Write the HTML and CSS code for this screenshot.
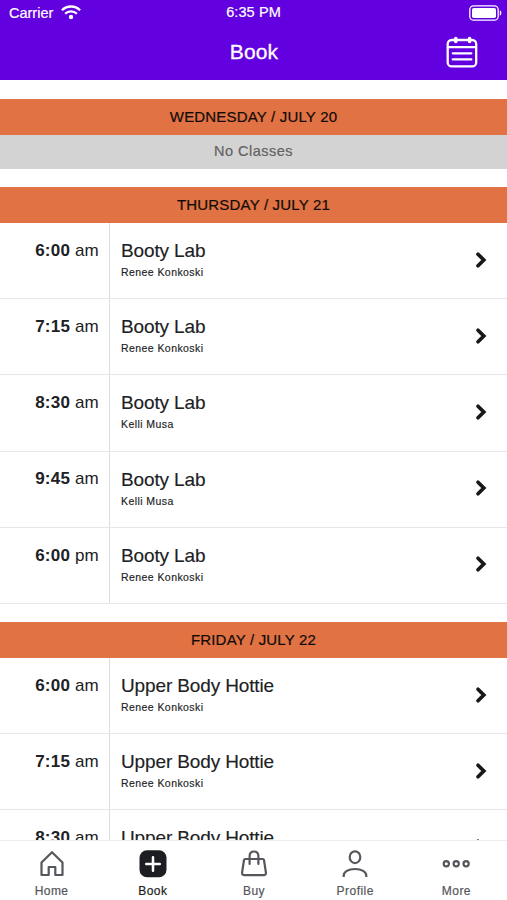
FILE: index.html
```html
<!DOCTYPE html>
<html lang="en">
<head>
<meta charset="utf-8">
<title>Book</title>
<link rel="stylesheet" href="styles.css">
</head>
<body>
<svg class="defs" width="0" height="0"><symbol id="chevron" viewBox="0 0 12 18"><path d="M3 3.200 8.800 9 3 14.800" fill="none" stroke="currentColor" stroke-width="3.700" stroke-linecap="round" stroke-linejoin="miter"/></symbol></svg>
<div class="app">
  <header class="top">
    <div class="status">
      <span class="carrier">Carrier
        <svg width="20" height="15" viewBox="0 0 20 15" fill="none" stroke="#fff" stroke-width="2.3"><path d="M.9 5.2a13 13 0 0 1 18.2 0M4.1 8.700a8.4 8.4 0 0 1 11.8 0"/><circle cx="10" cy="12" r="2.200" fill="#fff" stroke="none"/></svg>
      </span>
      <span class="clock">6:35 PM</span>
      <svg class="battery" width="33" height="16" viewBox="0 0 33 16"><rect x=".8" y=".8" width="28.4" height="14.4" rx="3.8" fill="none" stroke="#fff" stroke-width="1.3"/><rect x="3" y="3" width="24" height="10" rx="1.8" fill="#fff"/><path d="M30.8 5.2q1.6.8 1.6 2.8t-1.6 2.8z" fill="#fff"/></svg>
    </div>
    <div class="titlebar">
      <h1>Book</h1>
      <svg class="calendar" width="32" height="32" viewBox="0 0 32 32" fill="none" stroke="#fff" stroke-width="2.3" stroke-linecap="round"><rect x="1.7" y="4" width="28.5" height="26.4" rx="4"/><path d="M2 11.2h28M6.8 17.3h18.5M6.8 23.4h18.5"/><path d="M9.8 2.500v3M23.6 2.500v3" stroke-width="3.600"/></svg>
    </div>
  </header>
  <main class="schedule">
    <section class="day">
      <h2>WEDNESDAY / JULY 20</h2>
      <p class="empty">No Classes</p>
    </section>
    <section class="day">
      <h2>THURSDAY / JULY 21</h2>
      <div class="row"><div class="time"><b>6:00</b> am</div><div class="info"><div class="name">Booty Lab</div><div class="coach">Renee Konkoski</div></div><svg class="go"><use href="#chevron"/></svg></div>
      <div class="row"><div class="time"><b>7:15</b> am</div><div class="info"><div class="name">Booty Lab</div><div class="coach">Renee Konkoski</div></div><svg class="go"><use href="#chevron"/></svg></div>
      <div class="row"><div class="time"><b>8:30</b> am</div><div class="info"><div class="name">Booty Lab</div><div class="coach">Kelli Musa</div></div><svg class="go"><use href="#chevron"/></svg></div>
      <div class="row"><div class="time"><b>9:45</b> am</div><div class="info"><div class="name">Booty Lab</div><div class="coach">Kelli Musa</div></div><svg class="go"><use href="#chevron"/></svg></div>
      <div class="row"><div class="time"><b>6:00</b> pm</div><div class="info"><div class="name">Booty Lab</div><div class="coach">Renee Konkoski</div></div><svg class="go"><use href="#chevron"/></svg></div>
    </section>
    <section class="day">
      <h2>FRIDAY / JULY 22</h2>
      <div class="row"><div class="time"><b>6:00</b> am</div><div class="info"><div class="name">Upper Body Hottie</div><div class="coach">Renee Konkoski</div></div><svg class="go"><use href="#chevron"/></svg></div>
      <div class="row"><div class="time"><b>7:15</b> am</div><div class="info"><div class="name">Upper Body Hottie</div><div class="coach">Renee Konkoski</div></div><svg class="go"><use href="#chevron"/></svg></div>
      <div class="row"><div class="time"><b>8:30</b> am</div><div class="info"><div class="name">Upper Body Hottie</div></div><svg class="go"><use href="#chevron"/></svg></div>
    </section>
  </main>
  <nav class="tabs">
    <a class="tab"><svg width="28" height="28" viewBox="0 0 28 28"><path d="M3.5 25V12.500L14 2.200l10.5 10.3V25h-7.2v-8h-6.6v8z"/></svg>Home</a>
    <a class="tab active"><svg width="28" height="28" viewBox="0 0 28 28"><rect x=".5" y=".2" width="27" height="27" rx="7.5" fill="#1d1e21" stroke="none"/><path d="M14 7.2v13.6M7.2 14h13.6" stroke="#fff" stroke-width="2.5" stroke-linecap="round"/></svg>Book</a>
    <a class="tab"><svg width="28" height="28" viewBox="0 0 28 28"><path d="M5.2 9h17.6q1 0 1.200 1l1.900 12.500q.3 2.700-2.400 2.700h-19q-2.700 0-2.400-2.700L4 10q.2-1 1.200-1zM9.600 14V6.200q0-4.700 4.400-4.700t4.400 4.700V14" stroke-linecap="round"/></svg>Buy</a>
    <a class="tab"><svg width="28" height="28" viewBox="0 0 28 28"><ellipse cx="14" cy="7.200" rx="5.300" ry="5.900"/><path d="M2.700 27v-1.200c0-4 4.500-6.800 11.300-6.800s11.300 2.800 11.300 6.800V27"/></svg>Profile</a>
    <a class="tab"><svg width="28" height="28" viewBox="0 0 28 28"><circle cx="4.300" cy="13.800" r="2.600"/><circle cx="14.200" cy="13.800" r="2.600"/><circle cx="24.100" cy="13.800" r="2.600"/></svg>More</a>
  </nav>
</div>
</body>
</html>
```
FILE: styles.css
```css
* { box-sizing: border-box; }
body { margin: 0; font-family: "Liberation Sans", Arial, sans-serif; color: #202124; background: #fff; }
.defs { position: absolute; }
.app { height: 900px; display: flex; flex-direction: column; overflow: hidden; }
.top { flex: none; height: 80.4px; background: #6200e0; color: #fff; }
.status { height: 25px; padding: 0 5px 0 9px; display: grid; grid-template-columns: 1fr auto 1fr; align-items: center; font-size: 14.5px; -webkit-text-stroke: .2px; }
.carrier { display: flex; align-items: center; gap: 8px; }
.clock { margin: 0 4px; transform: translate(-2px, -1px); letter-spacing: .1px; }
.battery { justify-self: end; }
.titlebar { height: 54px; padding: 0 29.5px 0 62.5px; display: flex; align-items: center; }
h1 { flex: 1; margin: 0; text-align: center; font-size: 21px; font-weight: 400; letter-spacing: .1px; -webkit-text-stroke: .3px; }
.schedule { flex: 1; min-height: 0; overflow: hidden; }
.day { margin-top: 18.4px; }
h2 { margin: 0; height: 35.8px; line-height: 35px; text-align: center; font-size: 15px; font-weight: 400; letter-spacing: .18px; background: #e07243; color: #110b08; -webkit-text-stroke: .2px; }
.empty { margin: 0; height: 34.2px; line-height: 33px; text-align: center; font-size: 14.5px; letter-spacing: .5px; background: #d3d3d3; color: #626262; -webkit-text-stroke: .2px; }
.row { height: 76.2px; display: flex; border-bottom: 1px solid #e5e8ea; }
.time { width: 110px; padding: 17.8px 10px 0 0; text-align: right; border-right: 1px solid #d9dddf; font-size: 17px; line-height: 20px; letter-spacing: .2px; }
.info { flex: 1; padding: 17px 0 0 11px; }
.name { font-size: 19px; line-height: 22px; letter-spacing: -.13px; -webkit-text-stroke: .15px; }
.coach { margin-top: 3px; font-size: 10.5px; line-height: 14px; letter-spacing: .43px; -webkit-text-stroke: .15px; }
.go { align-self: center; width: 12px; height: 18px; margin: 0 20.5px 2px 0; color: #17181a; }
.tabs { flex: none; height: 60px; display: grid; grid-template-columns: repeat(5, 1fr); padding: 9px 0 0 1px; border-top: 1px solid #ececec; background: #fff; }
.tab { display: flex; flex-direction: column; align-items: center; gap: 6px; font-size: 12px; line-height: 14px; letter-spacing: .45px; color: #54565b; -webkit-text-stroke: .2px; }
.tab svg { fill: none; stroke: #55575c; stroke-width: 2.2; stroke-linejoin: round; }
.active { color: #1d1e21; }
```
